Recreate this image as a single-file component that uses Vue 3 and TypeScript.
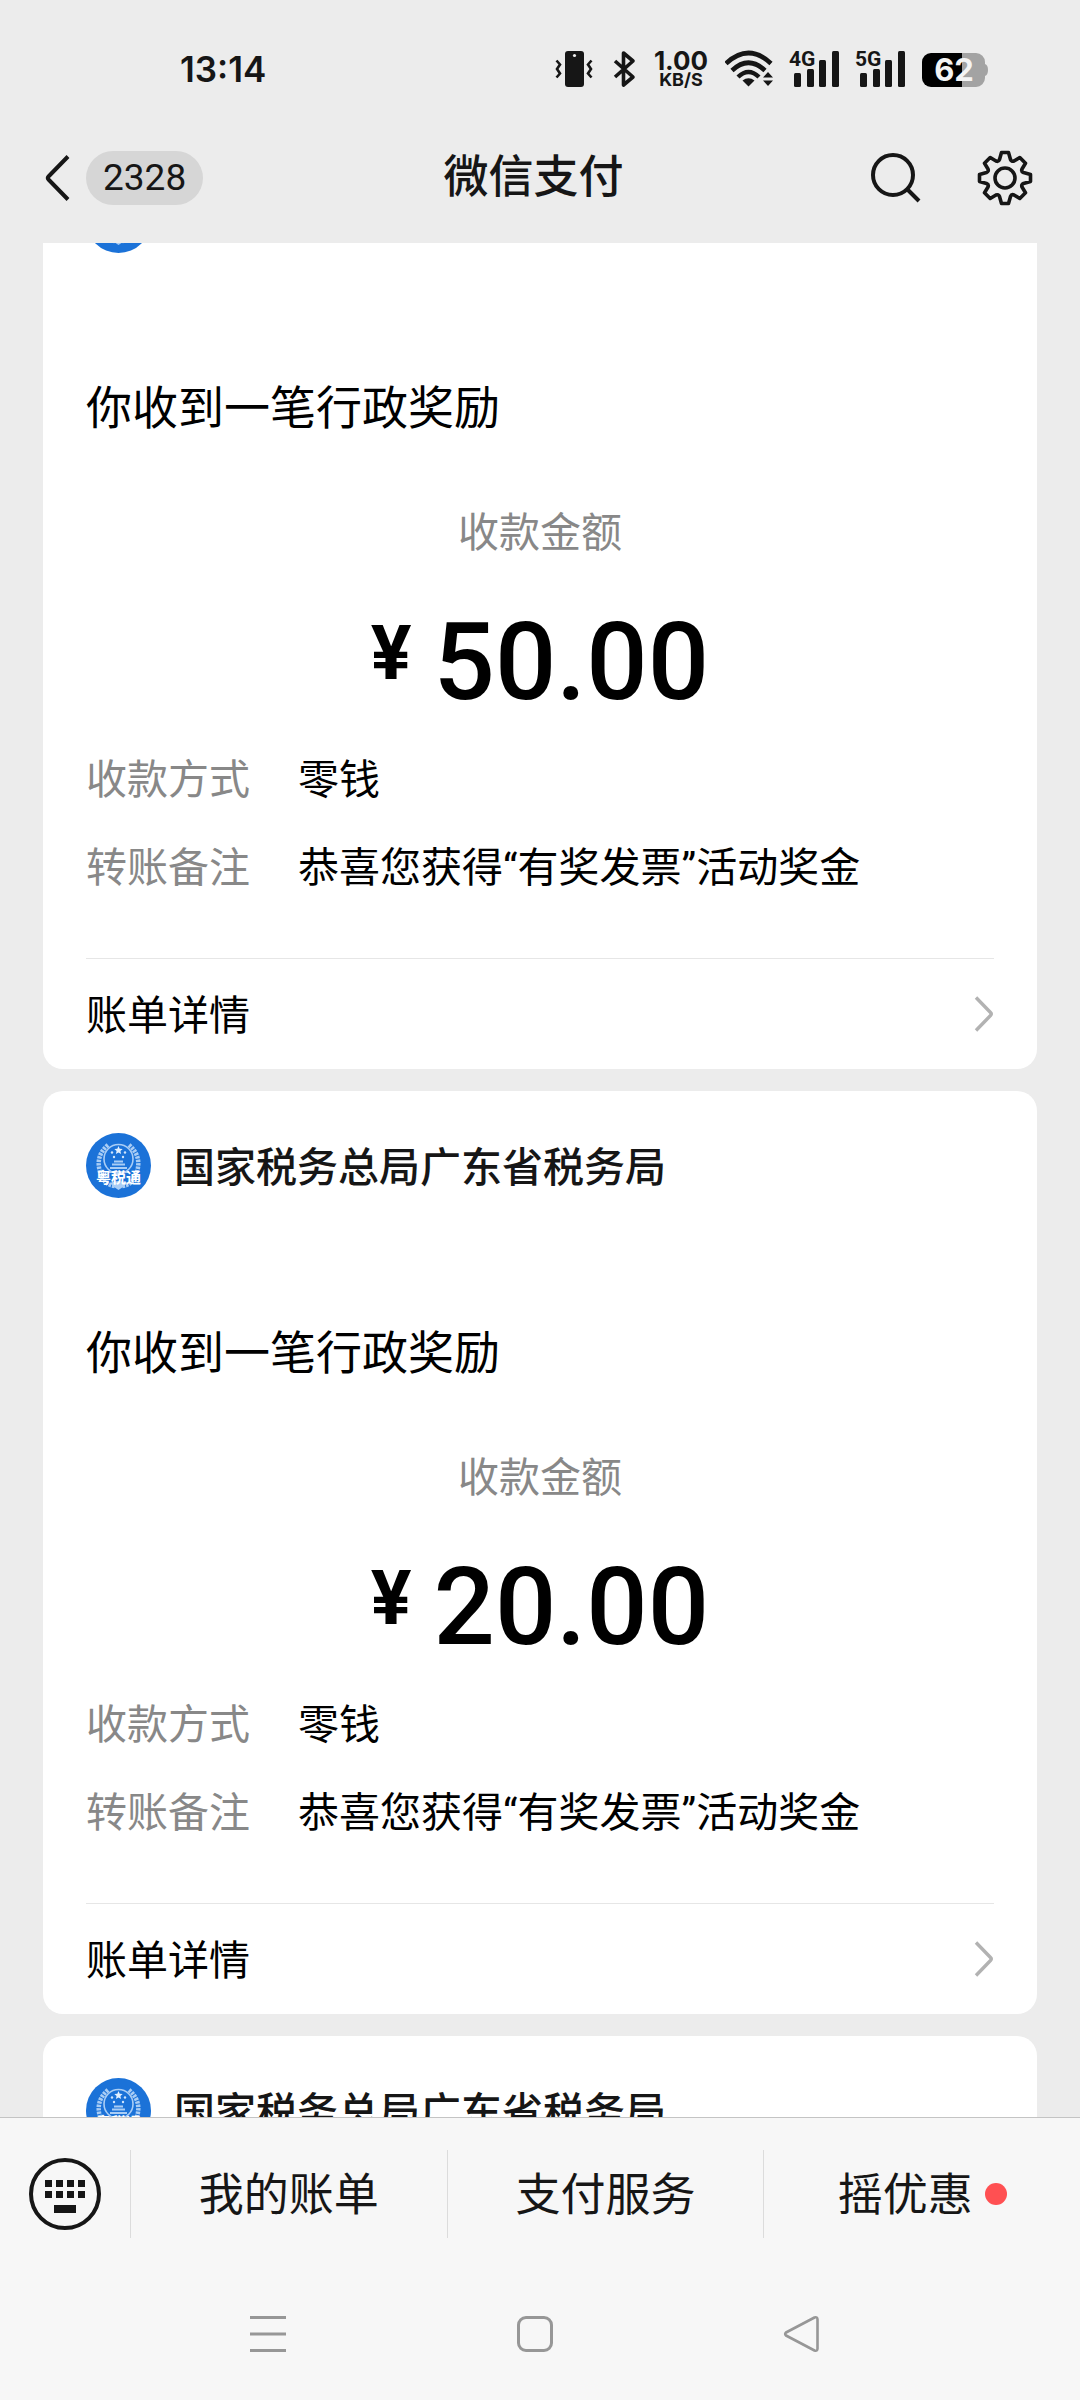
<script setup lang="ts">
import { onMounted, ref } from 'vue'

interface Detail {
  label: string
  value: string
}

interface Receipt {
  id: number
  sender: string
  heading: string
  amount: string
  details: Detail[]
}

const details: Detail[] = [
  { label: '收款方式', value: '零钱' },
  { label: '转账备注', value: '恭喜您获得“有奖发票”活动奖金' },
]

const sender = '国家税务总局广东省税务局'
const heading = '你收到一笔行政奖励'

const receipts: Receipt[] = [
  { id: 1, sender, heading, amount: '50.00', details },
  { id: 2, sender, heading, amount: '20.00', details },
  { id: 3, sender, heading, amount: '20.00', details },
]

const networks: string[] = ['4G', '5G']

const menu: { text: string; dot: boolean }[] = [
  { text: '我的账单', dot: false },
  { text: '支付服务', dot: false },
  { text: '摇优惠', dot: true },
]

const feed = ref<HTMLElement | null>(null)

// The conversation opens part-way down, with the oldest card cut by the header.
onMounted(() => {
  if (feed.value) feed.value.scrollTop = 119
})
</script>

<template>
  <div class="screen">
    <div class="status">
      <span class="clock">13:14</span>
      <div class="indicators">
        <svg width="44" height="38" viewBox="0 0 44 38" fill="none">
          <rect x="12" y="1" width="19" height="36" rx="3" fill="#161616" />
          <circle cx="21.500" cy="5.500" r="1.600" fill="#ececec" />
          <path d="M3.500 10.500l3.500 4-3 4.500 3 4.500-3.500 4M38.500 10.500l-3.500 4 3 4.500-3 4.500 3.500 4" stroke="#161616" stroke-width="2.600" />
        </svg>
        <svg width="24" height="38" viewBox="0 0 24 38" fill="none">
          <path d="M2 11l18 16-9.500 8V3l9.500 8L2 27" stroke="#161616" stroke-width="3.600" stroke-linejoin="round" />
        </svg>
        <div class="speed">
          <span class="rate">1.00</span>
          <span class="unit">KB/S</span>
        </div>
        <svg width="48" height="38" viewBox="0 0 48 38" fill="none">
          <path d="M1 13.500Q23.500-7.500 46 13.500" stroke="#161616" stroke-width="4.600" />
          <path d="M7 20.500Q23.500 5 40 20.500" stroke="#161616" stroke-width="4.600" />
          <path d="M13 27Q23.500 17 34 27" stroke="#161616" stroke-width="4.400" />
          <path d="M17.500 30.500Q23.500 26 29.500 30.500L23.500 36.500z" fill="#161616" />
          <path d="M38 27.500l5-5.500 5 5.500zM38 30.500h10l-5 5.500z" fill="#161616" />
        </svg>
        <svg v-for="net in networks" :key="net" width="50" height="38" viewBox="0 0 50 38" fill="#161616">
          <text class="net" x="0" y="16">{{ net }}</text>
          <rect x="5" y="23" width="7" height="14" rx="1.500" />
          <rect x="18" y="19" width="7" height="18" rx="1.500" />
          <rect x="30" y="10" width="7" height="27" rx="1.500" />
          <rect x="43" y="1" width="7" height="36" rx="1.500" />
        </svg>
        <svg width="67" height="38" viewBox="0 0 67 38">
          <path d="M10 3h31v34H10a9 9 0 0 1-9-9V12a9 9 0 0 1 9-9z" fill="#000" />
          <path d="M41 3h14a9 9 0 0 1 9 9v2q3 1 3 6t-3 6v2a9 9 0 0 1-9 9H41z" fill="#a3a3a3" />
          <text class="charge" x="33" y="31" text-anchor="middle">62</text>
        </svg>
      </div>
    </div>

    <header class="titlebar">
      <div class="side">
        <button class="back" type="button" aria-label="返回">
          <svg width="26" height="46" viewBox="0 0 26 46" fill="none" stroke="#161616" stroke-width="4">
            <path d="M24 1.500L4.500 21.500q-1.500 1.500 0 3L24 44.500" />
          </svg>
          <span class="count">2328</span>
        </button>
      </div>
      <h1 class="title">微信支付</h1>
      <div class="side actions">
        <button type="button" aria-label="搜索">
          <svg width="50" height="52" viewBox="0 0 50 52" fill="none" stroke="#161616" stroke-width="4">
            <circle cx="22" cy="23" r="20" />
            <path d="M36.500 37.500L48 49" />
          </svg>
        </button>
        <button type="button" aria-label="设置">
          <svg width="56" height="56" viewBox="-28 -28 56 56" fill="none" stroke="#161616" stroke-width="3.600" stroke-linejoin="round">
            <circle r="10" />
            <path
              d="M-3.500-25.500h7L5.500-18.500Q6.500-16 9-17L14.800-20.500L20.500-14.800L17-9Q16-6.500 18.500-5.500L25.500-3.500v7L18.500 5.500Q16 6.500 17 9L20.500 14.800L14.800 20.500L9 17Q6.500 16 5.500 18.500L3.500 25.500h-7L-5.500 18.500Q-6.500 16-9 17L-14.800 20.500L-20.500 14.800L-17 9Q-16 6.500-18.500 5.500L-25.500 3.500v-7L-18.500-5.500Q-16-6.500-17-9L-20.500-14.800L-14.800-20.500L-9-17Q-6.500-16-5.500-18.500z"
            />
          </svg>
        </button>
      </div>
    </header>

    <main ref="feed" class="feed">
      <article v-for="item in receipts" :key="item.id" class="card">
        <div class="sender">
          <svg class="avatar" width="65" height="65" viewBox="0 0 65 65">
            <circle cx="32.500" cy="32.500" r="32.500" fill="#1b72d8" />
            <g fill="none" stroke="#a9cdf5">
              <circle cx="32.500" cy="26" r="14.500" stroke-width="1.600" />
              <path d="M22 12Q10 22 13.500 37T29 53" stroke-width="4.500" stroke-dasharray="2.500 1" />
              <path d="M43 12Q55 22 51.500 37T36 53" stroke-width="4.500" stroke-dasharray="2.500 1" />
              <path d="M24 35h17M26 31.500h13M28 28.500h9M22 39h21" stroke-width="2" />
            </g>
            <path d="M32.500 13l1.200 2.800 3 .2-2.300 2 .7 3-2.600-1.600-2.600 1.600.7-3-2.300-2 3-.2z" fill="#e3f0ff" />
            <g fill="#cfe4fc">
              <circle cx="26" cy="19.500" r="1.200" />
              <circle cx="39" cy="19.500" r="1.200" />
              <circle cx="28" cy="24" r="1.200" />
              <circle cx="37" cy="24" r="1.200" />
            </g>
            <path d="M24 50q8.500-4 17 0l-4 4-4.500 3-4.500-3z" fill="#a9cdf5" />
            <text class="seal" x="32.500" y="50" text-anchor="middle">粤税通</text>
          </svg>
          <span class="name">{{ item.sender }}</span>
        </div>
        <h2 class="heading">{{ item.heading }}</h2>
        <p class="caption">收款金额</p>
        <p class="amount"><span class="yen">¥</span><span>{{ item.amount }}</span></p>
        <dl class="details">
          <div v-for="row in item.details" :key="row.label" class="row">
            <dt>{{ row.label }}</dt>
            <dd>{{ row.value }}</dd>
          </div>
        </dl>
        <a class="more" href="#">
          <span class="more-text">账单详情</span>
          <svg width="20" height="36" viewBox="0 0 20 36" fill="none" stroke="#b2b2b2" stroke-width="3.400">
            <path d="M2 1.500L16.500 16.500q1.500 1.500 0 3L2 34.500" />
          </svg>
        </a>
      </article>
    </main>

    <footer class="toolbar">
      <button class="keyboard" type="button" aria-label="键盘">
        <svg width="72" height="72" viewBox="0 0 72 72" fill="#161616">
          <circle cx="36" cy="36" r="34" fill="none" stroke="#161616" stroke-width="4" />
          <path d="M16 22h7v7h-7zM27 22h7v7h-7zM38 22h7v7h-7zM49 22h7v7h-7zM16 33h7v7h-7zM27 33h7v7h-7zM38 33h7v7h-7zM49 33h7v7h-7zM25 47h22v8H25z" />
        </svg>
      </button>
      <button v-for="entry in menu" :key="entry.text" class="entry" type="button">
        <span class="entry-text">{{ entry.text }}</span>
        <i v-if="entry.dot" class="dot"></i>
      </button>
    </footer>

    <nav class="system">
      <button type="button" aria-label="最近任务">
        <svg width="38" height="38" viewBox="0 0 38 38" fill="none" stroke="#979797" stroke-width="3">
          <path d="M1 2.500h36M1 19h36M1 35.500h36" />
        </svg>
      </button>
      <button type="button" aria-label="主屏幕">
        <svg width="38" height="38" viewBox="0 0 38 38" fill="none" stroke="#979797" stroke-width="3">
          <rect x="2.500" y="2.500" width="33" height="33" rx="7.500" />
        </svg>
      </button>
      <button type="button" aria-label="返回上一级">
        <svg width="38" height="38" viewBox="0 0 38 38" fill="none" stroke="#979797" stroke-width="2.600" stroke-linejoin="round">
          <path d="M3 17.500Q1.500 19 3 20.500L31.500 35.500Q34.500 36.500 34.500 33.500V4.500Q34.500 1.500 31.500 2.500z" />
        </svg>
      </button>
    </nav>
  </div>
</template>

<style>
body {
  margin: 0;
}
</style>

<style scoped>
.screen {
  display: flex;
  flex-direction: column;
  height: 100vh;
  background: #ececec;
  color: #161616;
  font-family: Roboto, "Noto Sans CJK SC", sans-serif;
}

button {
  display: flex;
  align-items: center;
  justify-content: center;
  padding: 0;
  border: 0;
  background: none;
  color: inherit;
  font: inherit;
}

svg {
  display: block;
  flex: none;
}

.status {
  display: flex;
  align-items: center;
  justify-content: space-between;
  flex: none;
  box-sizing: border-box;
  height: 112px;
  padding: 26px 92px 0 180px;
  font-family: Inter, sans-serif;
}

.clock {
  font-size: 35px;
  font-weight: 600;
}

.indicators {
  display: flex;
  align-items: center;
  gap: 16px;
}

.speed {
  display: flex;
  flex-direction: column;
  align-items: center;
  width: 56px;
  font-weight: 700;
}

.rate {
  font-size: 26px;
  line-height: 22px;
}

.unit {
  font-size: 18px;
  line-height: 16px;
}

.net {
  font: 700 21px Roboto, sans-serif;
}

.charge {
  font: 700 31px Inter, sans-serif;
  fill: #f4f4f4;
}

.titlebar {
  display: flex;
  align-items: center;
  flex: none;
  height: 131px;
  padding: 0 47px 0 44px;
}

.side {
  display: flex;
  flex: 1;
}

.actions {
  justify-content: flex-end;
  gap: 56px;
}

.back {
  gap: 16px;
}

.count {
  padding: 0 17px;
  border-radius: 27px;
  background: #d6d6d6;
  font-size: 37px;
  line-height: 54px;
}

.title {
  margin: 0;
  padding-right: 10px;
  font-size: 45px;
  font-weight: 500;
  line-height: 60px;
}

.feed {
  flex: 1;
  min-height: 0;
  padding: 22px 43px;
  overflow-y: auto;
  scrollbar-width: none;
}

.card {
  margin-bottom: 22px;
  padding: 42px 43px 0;
  border-radius: 20px;
  background: #fff;
  color: #000;
  font-size: 41px;
  line-height: 52px;
}

.sender {
  display: flex;
  align-items: center;
  gap: 23px;
  height: 65px;
}

.name {
  padding-top: 4px;
  color: #161616;
  font-weight: 500;
}

.seal {
  font: 700 15px "Noto Sans CJK SC", sans-serif;
  fill: #fff;
}

.heading {
  margin: 125px 0 69px;
  font-size: 46px;
  font-weight: 400;
  line-height: 60px;
}

.caption {
  margin: 0 0 48px;
  color: #888;
  text-align: center;
}

.amount {
  display: flex;
  justify-content: center;
  gap: 22px;
  margin: 0 0 37px;
  font-size: 108px;
  font-weight: 500;
  line-height: 110px;
}

.yen {
  padding-top: 8px;
  font-size: 76px;
  font-weight: 700;
  line-height: 76px;
}

.details {
  display: flex;
  flex-direction: column;
  gap: 36px;
  margin: 0 0 64px;
}

.row {
  display: flex;
}

dt {
  flex: none;
  width: 212px;
  color: #888;
}

dd {
  margin: 0;
}

.more {
  display: flex;
  align-items: center;
  justify-content: space-between;
  height: 110px;
  border-top: 1px solid #e6e6e6;
  color: inherit;
  text-decoration: none;
}

.more-text,
.entry-text {
  padding-top: 4px;
}

.toolbar {
  display: flex;
  align-items: center;
  flex: none;
  height: 152px;
  border-top: 1px solid #c4c4c4;
  background: #f7f7f7;
}

.keyboard {
  flex: none;
  width: 130px;
}

.entry {
  flex: 1;
  gap: 12px;
  height: 88px;
  border-left: 1px solid #dcdcdc;
  font-size: 45px;
  line-height: 60px;
}

.dot {
  width: 22px;
  height: 22px;
  border-radius: 50%;
  background: #ff5052;
}

.system {
  display: flex;
  flex: none;
  height: 128px;
  padding: 0 145px 2px 134px;
  background: #f7f7f7;
}

.system button {
  flex: 1;
}
</style>
